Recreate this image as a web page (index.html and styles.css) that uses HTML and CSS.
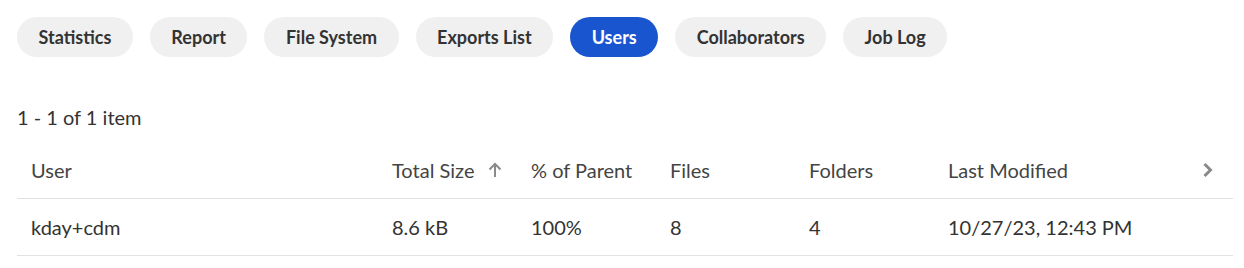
FILE: index.html
```html
<!DOCTYPE html>
<html lang="en">
<head>
  <meta charset="UTF-8">
  <title>Users</title>
  <link rel="stylesheet" href="styles.css">
</head>
<body>
  <nav class="tabs">
    <button class="tab">Statistics</button>
    <button class="tab">Report</button>
    <button class="tab">File System</button>
    <button class="tab">Exports List</button>
    <button class="tab active">Users</button>
    <button class="tab">Collaborators</button>
    <button class="tab">Job Log</button>
  </nav>

  <p class="count">1 - 1 of 1 item</p>

  <div class="grid">
    <div class="row head">
      <div class="cell">User</div>
      <div class="cell">Total Size <span class="sort">
        <svg width="14" height="16" viewBox="0 0 14 16"><path d="M7 15V2M1.5 7.5L7 2l5.5 5.5" fill="none" stroke="#8a8a8a" stroke-width="2"/></svg>
      </span></div>
      <div class="cell">% of Parent</div>
      <div class="cell">Files</div>
      <div class="cell">Folders</div>
      <div class="cell">Last Modified</div>
      <div class="cell more">
        <svg width="12" height="16" viewBox="0 0 12 16"><path d="M2.5 2L8.5 8l-6 6" fill="none" stroke="#8a8a8a" stroke-width="3"/></svg>
      </div>
    </div>
    <div class="row">
      <div class="cell">kday+cdm</div>
      <div class="cell">8.6 kB</div>
      <div class="cell">100%</div>
      <div class="cell">8</div>
      <div class="cell">4</div>
      <div class="cell">10/27/23, 12:43 PM</div>
      <div class="cell"></div>
    </div>
  </div>
</body>
</html>
```

FILE: styles.css
```css
body {
  font-family: Lato, "Open Sans", sans-serif;
  background-color: #fff;
  color: #333;
  margin: 0;
  padding: 17px 11px 0 17px;
}
.tabs {
  display: flex;
  gap: 17px;
}
.tab {
  height: 40px;
  padding: 0 21.5px;
  border: none;
  border-radius: 20px;
  background-color: #f0f0f0;
  color: #333;
  font-family: inherit;
  font-size: 18px;
  font-weight: 700;
  cursor: pointer;
}
.tab.active {
  background-color: #1a55d0;
  color: #fff;
}
.count {
  margin: 48px 0 0;
  font-size: 20px;
  line-height: 24px;
}
.grid {
  margin-top: 13px;
}
.row {
  display: grid;
  grid-template-columns: 361px 139px 139px 139px 139px 1fr 44px;
  height: 56px;
  align-items: center;
  border-bottom: 1px solid #e2e2e2;
  font-size: 20px;
}
.row.head {
  color: #444;
}
.cell {
  padding-left: 14px;
  display: flex;
  align-items: center;
}
.sort {
  display: inline-flex;
  margin-left: 14px;
}
.more {
  padding-left: 13px;
}
```
